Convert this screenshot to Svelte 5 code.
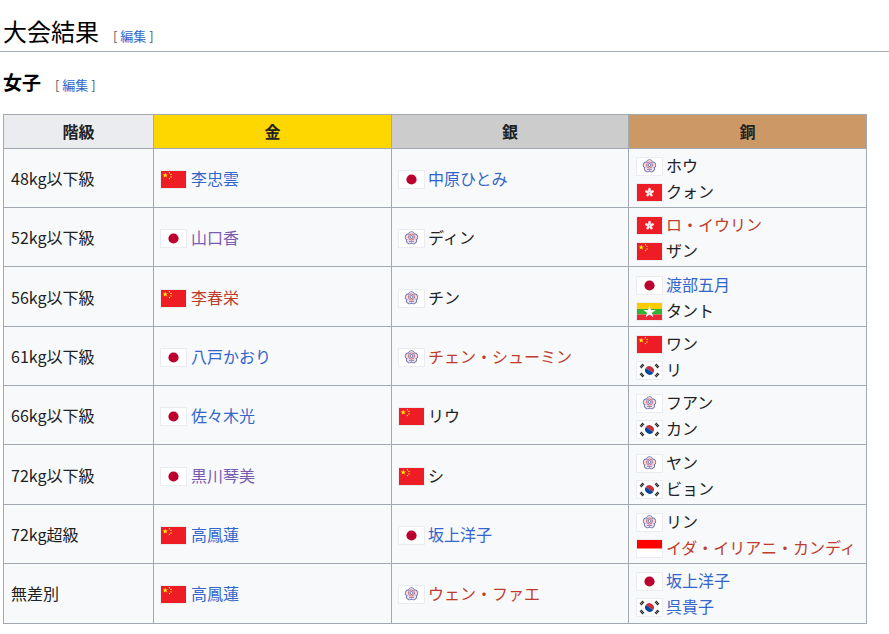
<script>
  const rows = [
    ['48kg以下級', [['cn', '李忠雲', 'b']], [['jp', '中原ひとみ', 'b']], [['tw', 'ホウ'], ['hk', 'クォン']]],
    ['52kg以下級', [['jp', '山口香', 'v']], [['tw', 'ディン']], [['hk', 'ロ・イウリン', 'r'], ['cn', 'ザン']]],
    ['56kg以下級', [['cn', '李春栄', 'r']], [['tw', 'チン']], [['jp', '渡部五月', 'b'], ['mm', 'タント']]],
    ['61kg以下級', [['jp', '八戸かおり', 'b']], [['tw', 'チェン・シューミン', 'r']], [['cn', 'ワン'], ['kr', 'リ']]],
    ['66kg以下級', [['jp', '佐々木光', 'b']], [['cn', 'リウ']], [['tw', 'フアン'], ['kr', 'カン']]],
    ['72kg以下級', [['jp', '黒川琴美', 'v']], [['cn', 'シ']], [['tw', 'ヤン'], ['kr', 'ビョン']]],
    ['72kg超級', [['cn', '高鳳蓮', 'b']], [['jp', '坂上洋子', 'b']], [['tw', 'リン'], ['id', 'イダ・イリアニ・カンディ', 'r']]],
    ['無差別', [['cn', '高鳳蓮', 'b']], [['tw', 'ウェン・ファエ', 'r']], [['jp', '坂上洋子', 'b'], ['kr', '呉貴子', 'b']]]
  ];
  const star = 'M0-1 .59.81-.95-.31H.95L-.59.81z';
  const petals = [0, 72, 144, 216, 288];
</script>

{#snippet flag(code)}
  <svg class="flag" width="27" height="19" viewBox="0 0 27 19">
    <rect x=".5" y=".5" width="26" height="18" fill="#fff" stroke="#eaecf0" />
    {#if code === 'cn'}
      <rect x="1" y="1" width="25" height="17" fill="#ee1c25" />
      <path transform="translate(5.2 5.3) scale(2.8)" d={star} fill="#ff0" />
      <g fill="#ff0">
        <circle cx="9.4" cy="2.8" r=".7" /><circle cx="11" cy="4.4" r=".7" />
        <circle cx="11" cy="7" r=".7" /><circle cx="9.4" cy="8.6" r=".7" />
      </g>
    {:else if code === 'jp'}
      <circle cx="13.5" cy="9.5" r="5.1" fill="#bc002d" />
    {:else if code === 'hk'}
      <rect x="1" y="1" width="25" height="17" fill="#ee1c25" />
      <g fill="#fff" opacity=".92">
        {#each petals as a}
          <ellipse cx="13.5" cy="7" rx="1.4" ry="2.2" transform="rotate({a} 13.5 9.5)" />
        {/each}
      </g>
      <circle cx="13.5" cy="9.5" r=".8" fill="#f28a90" />
    {:else if code === 'tw'}
      <g fill="#6a74b4" stroke="#6a74b4" stroke-width="1">
        {#each petals as a}
          <circle cx="13.5" cy="5.6" r="2.9" transform="rotate({a} 13.5 9)" />
        {/each}
      </g>
      <g fill="#f3dde2">
        {#each petals as a}
          <circle cx="13.5" cy="5.6" r="2.5" transform="rotate({a} 13.5 9)" />
        {/each}
      </g>
      <circle cx="13.5" cy="8" r="3" fill="#fff" stroke="#c9566a" stroke-width=".9" />
      <circle cx="13.5" cy="8" r="1.5" fill="#fff" stroke="#4f66a8" stroke-width="1" />
      <path d="M11 12.4h5" stroke="#7590c0" stroke-width="1" />
    {:else if code === 'mm'}
      <rect x="1" y="1" width="25" height="6" fill="#fecb00" />
      <rect x="1" y="7" width="25" height="5.5" fill="#34b233" />
      <rect x="1" y="12.5" width="25" height="5.5" fill="#ea2839" />
      <path transform="translate(13.5 10) scale(6.6)" d={star} fill="#fff" />
    {:else if code === 'kr'}
      <path d="M9.7 7.1a4.5 4.5 0 0 1 7.6 4.8z" fill="#cd2e3a" />
      <path d="M9.7 7.1a4.5 4.5 0 0 0 7.6 4.8z" fill="#0047a0" />
      <g stroke="#2a2a2a" stroke-width="2.8" stroke-dasharray="1.2 .3">
        <path d="M4.5 6.5 7.5 3.5M19.5 3.5 22.5 6.5M4.5 12.5 7.5 15.5M19.5 15.5 22.5 12.5" />
      </g>
    {:else if code === 'id'}
      <rect x="1" y="1" width="25" height="8.5" fill="#f00" />
    {/if}
  </svg>
{/snippet}

{#snippet entries(list)}
  {#each list as [code, name, link]}
    <div class="entry">
      {@render flag(code)}
      <span class={link}>{name}</span>
    </div>
  {/each}
{/snippet}

<main>
  <h2>大会結果<span class="edit">[ <span class="b">編集</span> ]</span></h2>
  <h3>女子<span class="edit">[ <span class="b">編集</span> ]</span></h3>
  <table>
    <colgroup>
      <col style="width:150px" /><col style="width:238px" /><col style="width:237px" /><col style="width:238px" />
    </colgroup>
    <thead>
      <tr>
        <th>階級</th>
        <th class="gold">金</th>
        <th class="silver">銀</th>
        <th class="bronze">銅</th>
      </tr>
    </thead>
    <tbody>
      {#each rows as [weight, gold, silver, bronze]}
        <tr>
          <td>{weight}</td>
          <td class="gold-cell">{@render entries(gold)}</td>
          <td class="silver-cell">{@render entries(silver)}</td>
          <td>{@render entries(bronze)}</td>
        </tr>
      {/each}
    </tbody>
  </table>
</main>

<style>
  :global(body) {
    margin: 0;
    background: #fff;
    color: #202122;
    font-family: "Noto Sans CJK JP", "Noto Sans", sans-serif;
  }

  main {
    padding: 0 0 0 3px;
    font-size: 16px;
    line-height: 26px;
  }

  h2 {
    margin: 0 0 0 -3px;
    padding: 11px 0 0 3px;
    height: 40px;
    line-height: 39px;
    font-size: 24px;
    font-weight: 400;
    color: #000;
    border-bottom: 1px solid #a2a9b1;
  }

  h3 {
    margin: 0;
    padding-top: 17px;
    height: 26px;
    line-height: 26px;
    font-size: 19px;
    font-weight: 700;
    color: #000;
  }

  .edit {
    margin-left: 14px;
    font-size: 13px;
    font-weight: 400;
    color: #54595d;
  }

  table {
    margin-top: 19px;
    border-collapse: collapse;
    table-layout: fixed;
    width: 863px;
    background: #f8f9fa;
  }

  th,
  td {
    border: 1px solid #a2a9b1;
    padding: 0 7px;
    text-align: left;
  }

  th {
    height: 32.8px;
    text-align: center;
    background: #eaecf0;
    font-weight: 700;
  }

  td {
    height: 58.33px;
  }

  tr:last-child td {
    height: 58px;
    padding-bottom: 1px;
  }

  .gold { background: gold; }
  .silver { background: #ccc; }
  .bronze { background: #c96; }

  .gold-cell .entry {
    margin-left: -1px;
    gap: 4px;
  }

  .silver-cell {
    padding-left: 6px;
  }

  .entry {
    display: flex;
    align-items: center;
    gap: 3px;
    height: 26px;
  }

  .flag {
    flex: none;
    margin-top: 3px;
  }

  .b { color: #3366cc; }
  .v { color: #795cb2; }
  .r { color: #bf3c2c; }
</style>
